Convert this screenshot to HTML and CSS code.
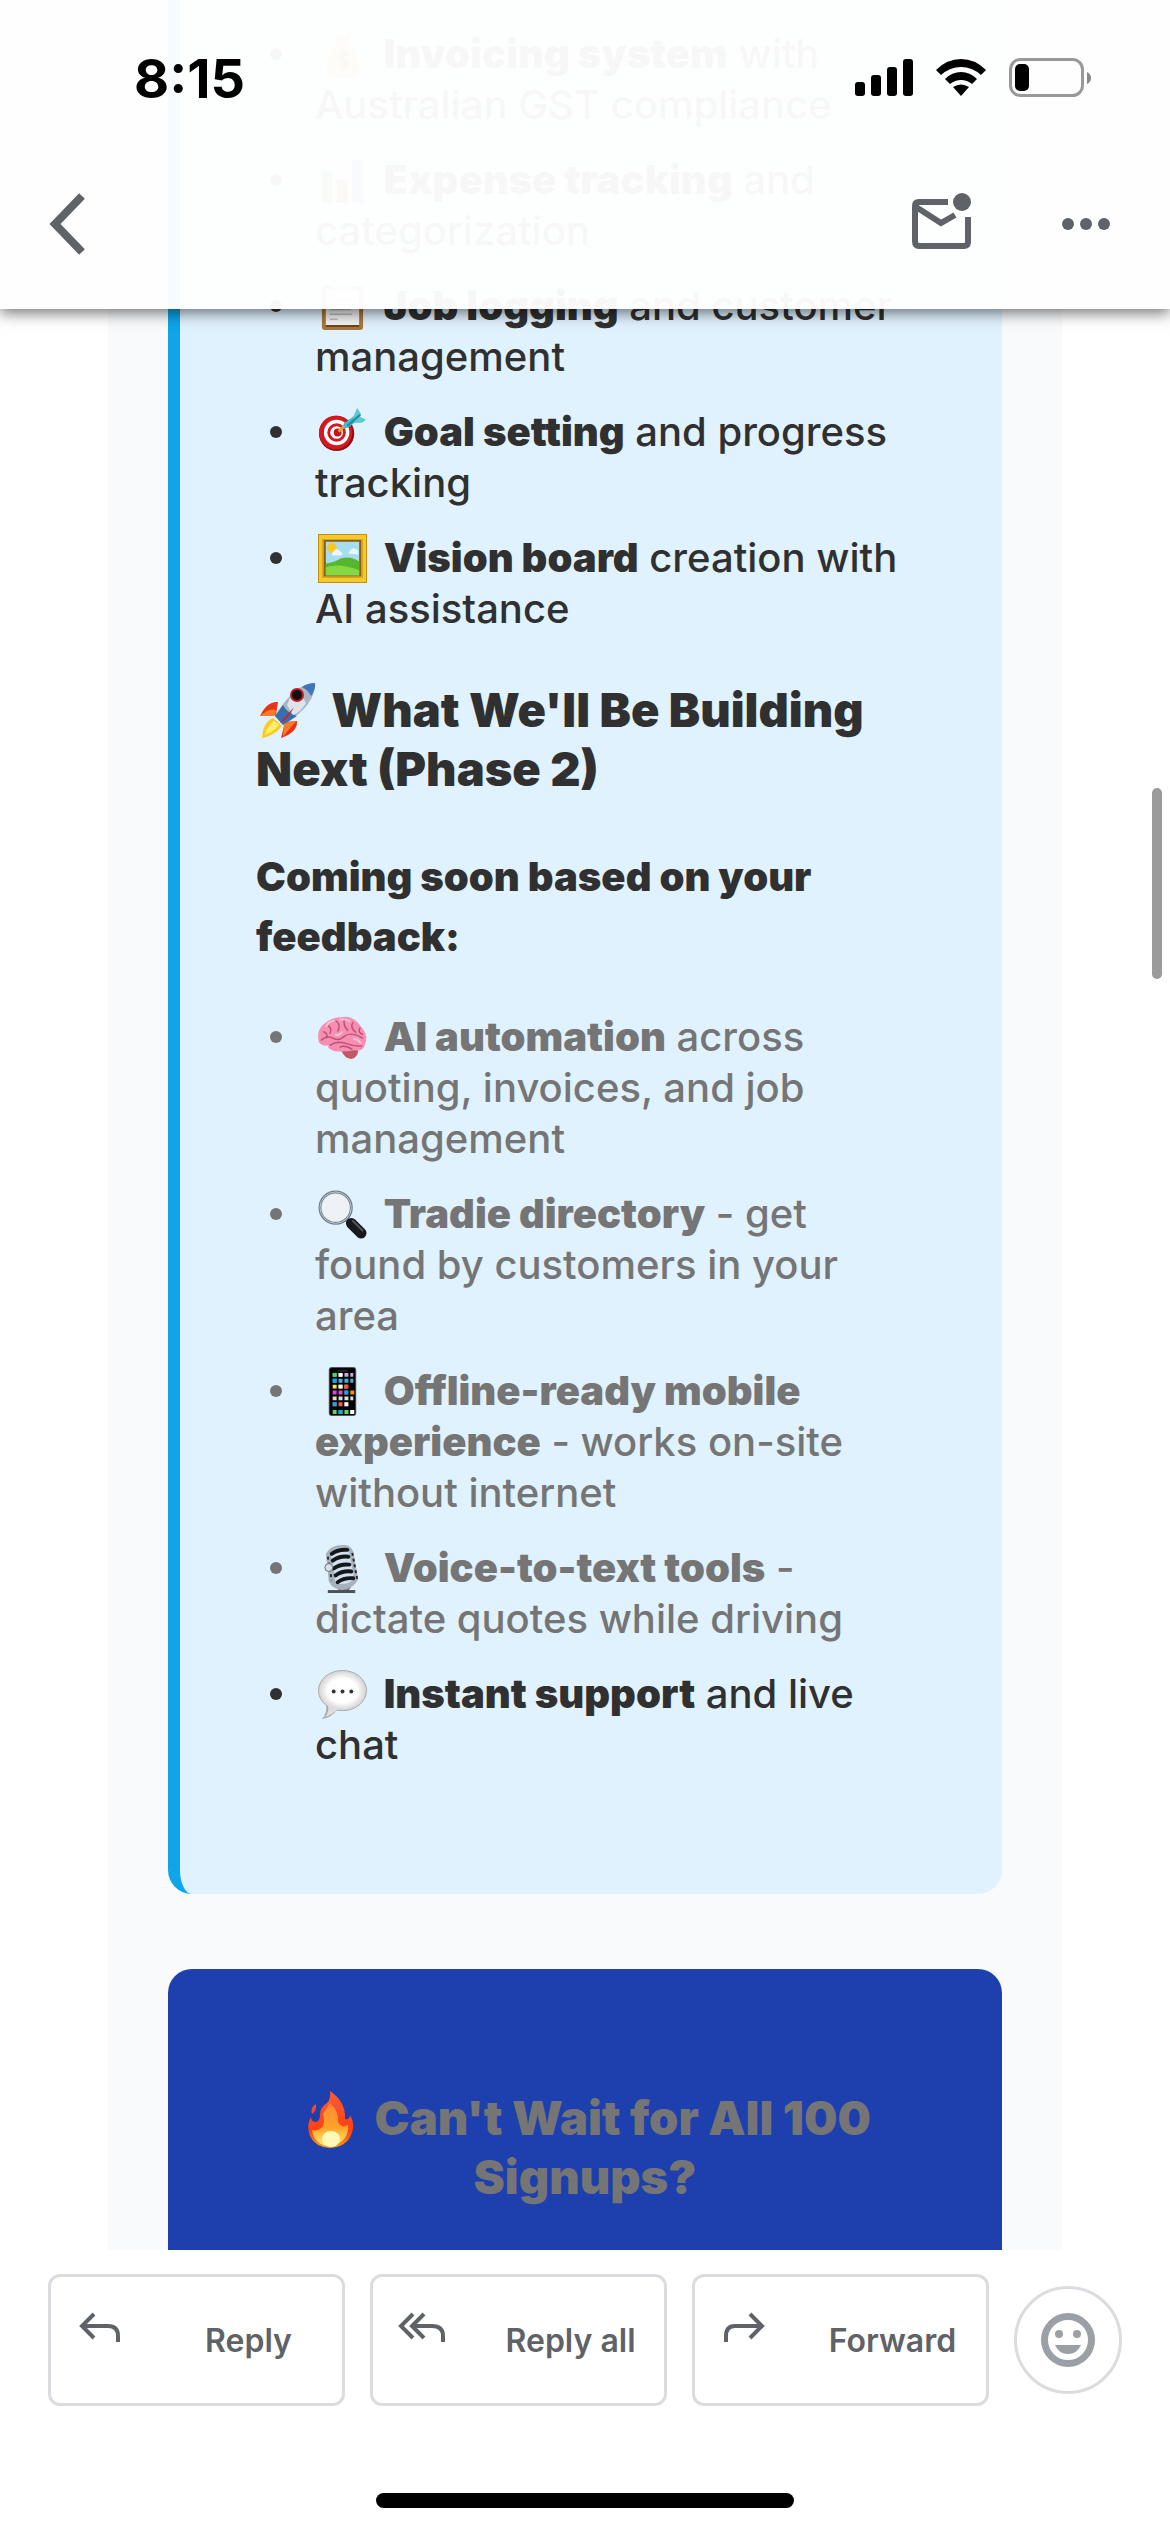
FILE: index.html
```html
<!DOCTYPE html>
<html lang="en">
<head>
<meta charset="utf-8">
<meta name="viewport" content="width=device-width, initial-scale=1">
<title>Mail</title>
<link rel="stylesheet" href="styles.css">
</head>
<body>
<div class="app">
  <header class="top">
    <div class="status">
      <span class="time">8:15</span>
      <div class="status-icons">
        <svg width="58" height="40" viewBox="0 0 58 40"><rect x="0" y="24" width="10" height="14" rx="3"/><rect x="16" y="17" width="10" height="21" rx="3"/><rect x="32" y="9" width="10" height="29" rx="3"/><rect x="48" y="1" width="10" height="37" rx="3"/></svg>
        <svg width="52" height="40" viewBox="0 0 52 40"><path d="M1 12Q12 1 26 1T51 12L46 17Q37 9 26 9T6 17ZM10 21Q17 14 26 14T42 21L37 26Q32 22 26 22T15 26ZM18 29Q26 24 34 29L26 38Z"/></svg>
        <svg width="83" height="40" viewBox="0 0 83 40"><rect x="1.500" y="1.500" width="72" height="36" rx="10" fill="none" stroke="#999" stroke-width="3"/><rect x="6" y="6" width="14" height="27" rx="5"/><path d="M78 14Q82 16 82 20T78 26Z" fill="#888"/></svg>
      </div>
    </div>
    <div class="toolbar">
      <button class="icon-btn" aria-label="Back"><svg width="38" height="64" viewBox="0 0 38 64"><path d="M34 4L7 32L34 60" fill="none" stroke="#5f6368" stroke-width="8"/></svg></button>
      <div class="tools">
        <button class="icon-btn" aria-label="Mark as unread"><svg width="60" height="64" viewBox="0 0 60 64"><g fill="none" stroke="#5f6368" stroke-width="6"><path d="M36 10H7Q3 10 3 14V49Q3 54 7 54H52Q56 54 56 50V25" /><path d="M4 15L29 31L43 23"/></g><circle cx="50" cy="10" r="9" fill="#5f6368"/></svg></button>
        <button class="icon-btn" aria-label="More"><svg width="48" height="12" viewBox="0 0 48 12" fill="#5f6368"><circle cx="6" cy="6" r="6"/><circle cx="24" cy="6" r="6"/><circle cx="42" cy="6" r="6"/></svg></button>
      </div>
    </div>
  </header>

  <main class="message">
    <article class="mail">
      <section class="card">
        <ul class="list">
          <li><p><svg class="emoji" viewBox="0 0 50 50"><path d="M17 4L25 8L33 3L30 15H20Z" fill="#d9b25f"/><path d="M20 14C8 22 5 48 13 49H37C45 48 42 22 30 14Z" fill="#e0b964"/><path d="M25 20V42M30 26Q25 22 21 26Q20 30 25 31Q31 32 29 36Q25 40 20 36" fill="none" stroke="#6b5326" stroke-width="2"/></svg> <b>Invoicing system</b> with Australian GST compliance</p></li>
          <li><p><svg class="emoji" viewBox="0 0 50 50"><path d="M3 2H48V48H3Z" fill="#eef3f6"/><path d="M4 16H14V48H4Z" fill="#3bb54a"/><path d="M19 25H30V48H19Z" fill="#e0453a"/><path d="M35 4H46V48H35Z" fill="#3b83e0"/></svg> <b>Expense tracking</b> and categorization</p></li>
          <li><p><svg class="emoji" viewBox="0 0 50 50"><rect x="4" y="4" width="42" height="45" rx="3" fill="#a8763a"/><path d="M8 8H42V44H8Z" fill="#f2f2f2"/><path d="M8 44H42V46H8Z" fill="#6b4620"/><path d="M15 3H35V9H15Z" fill="#c9ccd0"/><path d="M12 18H34M12 23H36M12 28H34M12 33H35M12 38H20" stroke="#bbb" stroke-width="1.500"/></svg> <b>Job logging</b> and customer management</p></li>
          <li><p><svg class="emoji" viewBox="0 0 50 50"><circle cx="19" cy="26" r="18" fill="#8f1016"/><circle cx="18" cy="25" r="17" fill="#d31920"/><circle cx="19" cy="25" r="13" fill="#fff"/><circle cx="19" cy="25" r="9.500" fill="#d31920"/><circle cx="19" cy="25" r="6.500" fill="#fff"/><circle cx="20" cy="25" r="4" fill="#c4151c"/><path d="M21 24L34 12" stroke="#e2a33a" stroke-width="3"/><path d="M27 21L26 16L37 8L40 13L31 20Z" fill="#41bccb"/><path d="M36 9L40 0L44 6L43 9L49 12L45 15H38Z" fill="#5fc8d4"/><path d="M30 18L43 7" stroke="#22899c" stroke-width="2"/></svg> <b>Goal setting</b> and progress tracking</p></li>
          <li><p><svg class="emoji" viewBox="0 0 50 50"><path d="M0 0H50V50H0Z" fill="#c68e10"/><path d="M1 1H49V49H1Z" fill="#f2c92f"/><path d="M4 5H46V45H4Z" fill="#dba51b"/><path d="M6 6H44V43H6Z" fill="#8b5d10"/><path d="M8 8H42V42H8Z" fill="#a6def0"/><circle cx="14" cy="14" r="5" fill="#fbc926"/><path d="M14 21Q18 12 23 18Q26 20 24 22H15ZM31 20Q35 11 41 17V21Z" fill="#f0f5fc"/><path d="M8 30Q17 29 23 25Q33 22 42 28V42H8Z" fill="#58b52e"/><path d="M8 34Q22 29 42 37V42H8Z" fill="#86d840"/></svg> <b>Vision board</b> creation with AI assistance</p></li>
        </ul>
        <h3 class="heading"><svg class="emoji emoji-lg" viewBox="0 0 57 57"><path d="M19 19Q8 18 1 33L17 32ZM38 38Q39 49 22 55L26 39Z" fill="#e63416"/><path d="M1 33Q10 25 17 27L16 33ZM38 38Q33 42 24 54L25 40Z" fill="#ff7a27"/><path d="M14 35Q4 39 3 55Q15 53 23 43Z" fill="#ffc824"/><path d="M15 38Q8 43 6 52Q14 49 20 42Z" fill="#fff06a"/><path d="M56 0Q36 0 16 33L24 42Q57 22 56 0Z" fill="#a9b6c4"/><path d="M56 0Q49 0 43 4Q49 7 52 13Q57 6 56 0Z" fill="#3f76b5"/><path d="M24 22L16 33L24 42L38 33Q28 30 24 22Z" fill="#356fae"/><path d="M33 10Q40 6 47 20Q42 29 34 32L28 22Z" fill="#dde5ec"/><circle cx="38" cy="12" r="7" fill="#bd1d24"/><circle cx="38" cy="12" r="5" fill="#101010"/><path d="M35 24L21 40Q28 38 35 24Z" fill="#d91e1e"/></svg> What We'll Be Building Next (Phase 2)</h3>
        <p class="lead">Coming soon based on your feedback:</p>
        <ul class="list">
          <li class="muted"><p><svg class="emoji" viewBox="0 0 50 50"><path d="M24 36Q31 35 41 36Q42 45 34 47Q27 46 24 39Z" fill="#c05a66"/><path d="M1 30Q-2 19 5 12Q13 4 25 4Q37 3 44 14Q52 23 48 32Q46 40 37 38Q28 40 17 39Q8 36 11 33Q4 34 1 30Z" fill="#f68fb2"/><path d="M3 28Q9 22 16 26Q22 29 28 23Q35 19 46 26M12 33Q20 28 28 31T45 34M10 13Q15 15 12 21M18 8Q24 11 20 19M27 6Q25 13 31 18M36 9Q32 15 39 20M5 19Q10 20 9 25M22 35Q27 32 35 37M43 15Q40 20 46 22" fill="none" stroke="#bf5179" stroke-width="1.500"/><path d="M8 14Q11 8 17 8M22 7Q28 5 33 9M25 19Q22 24 17 22M36 26Q41 27 44 31" fill="none" stroke="#ffc0d4" stroke-width="2"/></svg> <b>AI automation</b> across quoting, invoices, and job management</p></li>
          <li class="muted"><p><svg class="emoji" viewBox="0 0 50 50"><path d="M28 29L36 36" stroke="#8b9299" stroke-width="5"/><circle cx="18" cy="18" r="16" fill="#eef2f5" stroke="#737d86" stroke-width="3"/><circle cx="18" cy="18" r="16" fill="none" stroke="#b9c9d8" stroke-width="1"/><path d="M34 34L44 44" stroke="#17191c" stroke-width="11" stroke-linecap="round"/><path d="M35 31L46 42" stroke="#575c61" stroke-width="2"/></svg> <b>Tradie directory</b> - get found by customers in your area</p></li>
          <li class="muted"><p><svg class="emoji" viewBox="0 0 50 50"><rect x="11" y="0" width="28" height="50" rx="3" fill="#555"/><rect x="12" y="1" width="26" height="48" rx="2" fill="#050505"/><path d="M20 4H30" stroke="#222" stroke-width="2"/><g stroke-width="4" stroke-dasharray="4 2" fill="none"><path d="M15 8H36" stroke="#c8a8df"/><path d="M15 14H36" stroke="#4fafd8"/><path d="M15 20H30" stroke="#ffdf5a"/><path d="M15 26H30" stroke="#df4ad2"/><path d="M15 32H36" stroke="#ddd"/><path d="M15 38H30" stroke="#ee5d55"/><path d="M15 46H36" stroke="#5bd76c"/></g><path d="M15 6H19V10H15Z" fill="#4ad460"/><path d="M15 12H19V16H15ZM27 24H31V28H27ZM15 36H19V40H15ZM21 44H25V48H21Z" fill="#11a8ee"/><path d="M21 6H25V10H21ZM21 18H25V22H21ZM27 36H31V40H27ZM33 44H37V48H33Z" fill="#fff"/><path d="M33 24H37V28H33Z" fill="#ff8d0b"/><path d="M27 18H31V22H27Z" fill="#f1524e"/></svg> <b>Offline-ready mobile experience</b> - works on-site without internet</p></li>
          <li class="muted"><p><svg class="emoji" viewBox="0 0 50 50"><path d="M18 43H34L31 48H22Z" fill="#777"/><path d="M10 47H38V50H10Z" fill="#4d5257"/><path d="M8 10Q13 0 28 1Q34 2 36 8L41 36Q37 45 25 47Q14 46 11 38Z" fill="#a7b2be"/><path d="M13 9Q22 1 31 5L37 36Q29 43 18 40Z" fill="#d1dfef"/><path d="M14 10Q21 5 30 6M15 17Q22 12 31 13M16 25Q23 20 32 21M18 32Q25 27 34 28M20 39Q27 34 36 35" fill="none" stroke="#15181b" stroke-width="4" stroke-linecap="round"/><path d="M35 9L40 36M10 13L14 37" stroke="#24282c" stroke-width="2" stroke-dasharray="3 3"/><circle cx="11" cy="24" r="4" fill="#dadfe4" stroke="#69717a"/></svg> <b>Voice-to-text tools</b> - dictate quotes while driving</p></li>
          <li><p><svg class="emoji" viewBox="0 0 50 50"><defs><radialGradient id="bubble"><stop offset="0.600" stop-color="#fff"/><stop offset="1" stop-color="#d2d2d2"/></radialGradient></defs><path d="M8 34Q10 44 4 50Q15 48 20 40Z" fill="#aaa"/><ellipse cx="25" cy="21" rx="24.500" ry="20.500" fill="url(#bubble)" stroke="#aaa" stroke-width="1"/><path d="M10 35Q12 43 7 48Q15 46 21 39Z" fill="#ddd"/><g fill="#333"><circle cx="16" cy="22" r="2"/><circle cx="25" cy="22" r="2"/><circle cx="34" cy="22" r="2"/></g></svg> <b>Instant support</b> and live chat</p></li>
        </ul>
      </section>
      <section class="cta">
        <h3 class="heading"><svg class="emoji emoji-lg" viewBox="0 0 57 57"><defs><linearGradient id="fire" x1="0" y1="0" x2="0" y2="1"><stop offset="0" stop-color="#ff5b36"/><stop offset="0.700" stop-color="#ff4010"/><stop offset="1" stop-color="#ff9d12"/></linearGradient><linearGradient id="core" x1="0" y1="0" x2="0" y2="1"><stop offset="0" stop-color="#ff8a3c"/><stop offset="0.550" stop-color="#ffa227"/><stop offset="1" stop-color="#fff27a"/></linearGradient></defs><path d="M28 0Q44 11 43 28Q48 29 48 24Q54 34 49 44Q44 56 28 57Q13 56 8 45Q4 34 9 26Q9 31 14 31Q18 30 18 24Q18 16 25 12Q29 8 28 0Z" fill="url(#fire)"/><path d="M28 12Q37 20 36 31Q40 38 46 34Q48 49 29 56Q12 54 10 39Q16 41 21 35Q23 29 21 23Z" fill="url(#core)"/><ellipse cx="29" cy="48" rx="9" ry="8" fill="#fff9b8"/><path d="M14 13Q8 16 10 23Q15 20 14 13Z" fill="#f3482c"/></svg> Can't Wait for All 100 Signups?</h3>
      </section>
    </article>
    <div class="scrollbar"></div>
  </main>

  <footer class="bottom">
    <div class="actions">
      <button class="action"><svg width="60" height="60" viewBox="0 0 60 60"><path d="M22 4L10 16L22 28M10 16H36Q46 16 46 26V32"/></svg><span>Reply</span></button>
      <button class="action"><svg width="60" height="60" viewBox="0 0 60 60"><path d="M19 4L7 16L19 28M30 4L18 16L30 28M18 16H38Q49 16 49 26V32"/></svg><span>Reply all</span></button>
      <button class="action"><svg width="60" height="60" viewBox="0 0 60 60"><path d="M34 4L46 16L34 28M46 16H19Q10 16 10 26V32"/></svg><span>Forward</span></button>
      <button class="react" aria-label="Add emoji reaction"><svg width="54" height="54" viewBox="0 0 54 54" fill="#9aa0a6"><circle cx="27" cy="27" r="23.500" fill="none" stroke="#9aa0a6" stroke-width="7"/><circle cx="18" cy="21" r="4"/><circle cx="36" cy="21" r="4"/><path d="M14 32H40Q36 41 27 41T14 32Z"/></svg></button>
    </div>
    <div class="home"></div>
  </footer>
</div>
</body>
</html>
```
FILE: styles.css
```css
* { box-sizing: border-box; }

body {
  margin: 0;
  background: #fff;
  color: #303030;
  font-family: Inter, "Liberation Sans", sans-serif;
}

button {
  padding: 0;
  border: 0;
  background: none;
  font: inherit;
  color: #5f6368;
}

svg { display: block; flex: none; }
h3, p, ul { margin: 0; padding: 0; }

.app {
  position: relative;
  display: flex;
  flex-direction: column;
  height: 100vh;
}

/* Translucent bar that the message scrolls under */
.top {
  position: absolute;
  inset: 0 0 auto;
  z-index: 1;
  padding-bottom: 17px;
  background: rgba(254, 254, 254, 0.97);
  box-shadow: 0 4px 14px rgba(0, 0, 0, 0.55);
}

.status {
  display: flex;
  align-items: center;
  justify-content: space-between;
  height: 156px;
  padding: 0 78px 0 134px;
  color: #000;
}

.time { font-size: 54px; font-weight: 700; }
.status-icons { display: flex; gap: 22px; }

.toolbar {
  display: flex;
  align-items: center;
  justify-content: space-between;
  height: 136px;
  padding: 0 60px 0 48px;
}

.tools { display: flex; align-items: center; gap: 90px; }

.message {
  position: relative;
  flex: 1;
  min-height: 0;
  overflow: hidden;
}

.mail {
  margin: 0 108px;
  padding: 0 60px;
  background: #f8fafc;
}

.card {
  padding: 28px 88px 100px 76px;
  border-left: 12px solid #0ea5e9;
  border-radius: 0 0 24px 24px;
  background: #e0f2fe;
}

.list {
  padding-left: 14px;
  list-style: none;
  font-size: 40px;
  line-height: 51px;
  font-weight: 500;
}

.list li {
  display: flex;
  gap: 33px;
  margin-bottom: 24px;
}

.list li::before {
  content: "";
  flex: none;
  width: 12px;
  height: 12px;
  margin-top: 20px;
  border-radius: 50%;
  background: currentColor;
}

.list b { font-weight: 900; }
.muted { color: #757575; }

.emoji {
  display: inline-block;
  width: 49px;
  height: 49px;
  margin: 0 6px 0 3px;
  vertical-align: -11px;
}

.emoji-lg {
  width: 57px;
  height: 57px;
  vertical-align: -13px;
}

.heading {
  font-size: 47px;
  line-height: 57px;
  font-weight: 900;
}

.card .heading { margin: 47px 0 50px; }

.lead {
  margin-bottom: 44px;
  font-size: 40px;
  line-height: 60px;
  font-weight: 900;
}

.cta {
  margin-top: 75px;
  padding: 120px 76px;
  border-radius: 24px 24px 0 0;
  background: #1e40af;
  color: #757575;
  text-align: center;
}

.scrollbar {
  position: absolute;
  top: 35%;
  right: 8px;
  width: 10px;
  height: 191px;
  border-radius: 5px;
  background: #9b9b9b;
}

.bottom {
  display: flex;
  flex-direction: column;
  justify-content: space-between;
  align-items: center;
  height: 282px;
  padding: 24px 48px;
  background: #fff;
}

.actions {
  display: flex;
  align-items: center;
  gap: 25px;
  width: 100%;
}

.action {
  flex: 1;
  display: flex;
  align-items: center;
  height: 132px;
  padding-left: 21px;
  border: 3px solid #dadce0;
  border-radius: 12px;
  font-size: 32px;
  font-weight: 600;
}

.action svg {
  fill: none;
  stroke: #5f6368;
  stroke-width: 4px;
}

.action span { flex: 1; margin-left: 23px; white-space: nowrap; }

.react {
  display: grid;
  place-items: center;
  width: 108px;
  height: 108px;
  border: 3px solid #dadce0;
  border-radius: 50%;
}

.home {
  width: 39%;
  height: 15px;
  border-radius: 8px;
  background: #000;
}
```
